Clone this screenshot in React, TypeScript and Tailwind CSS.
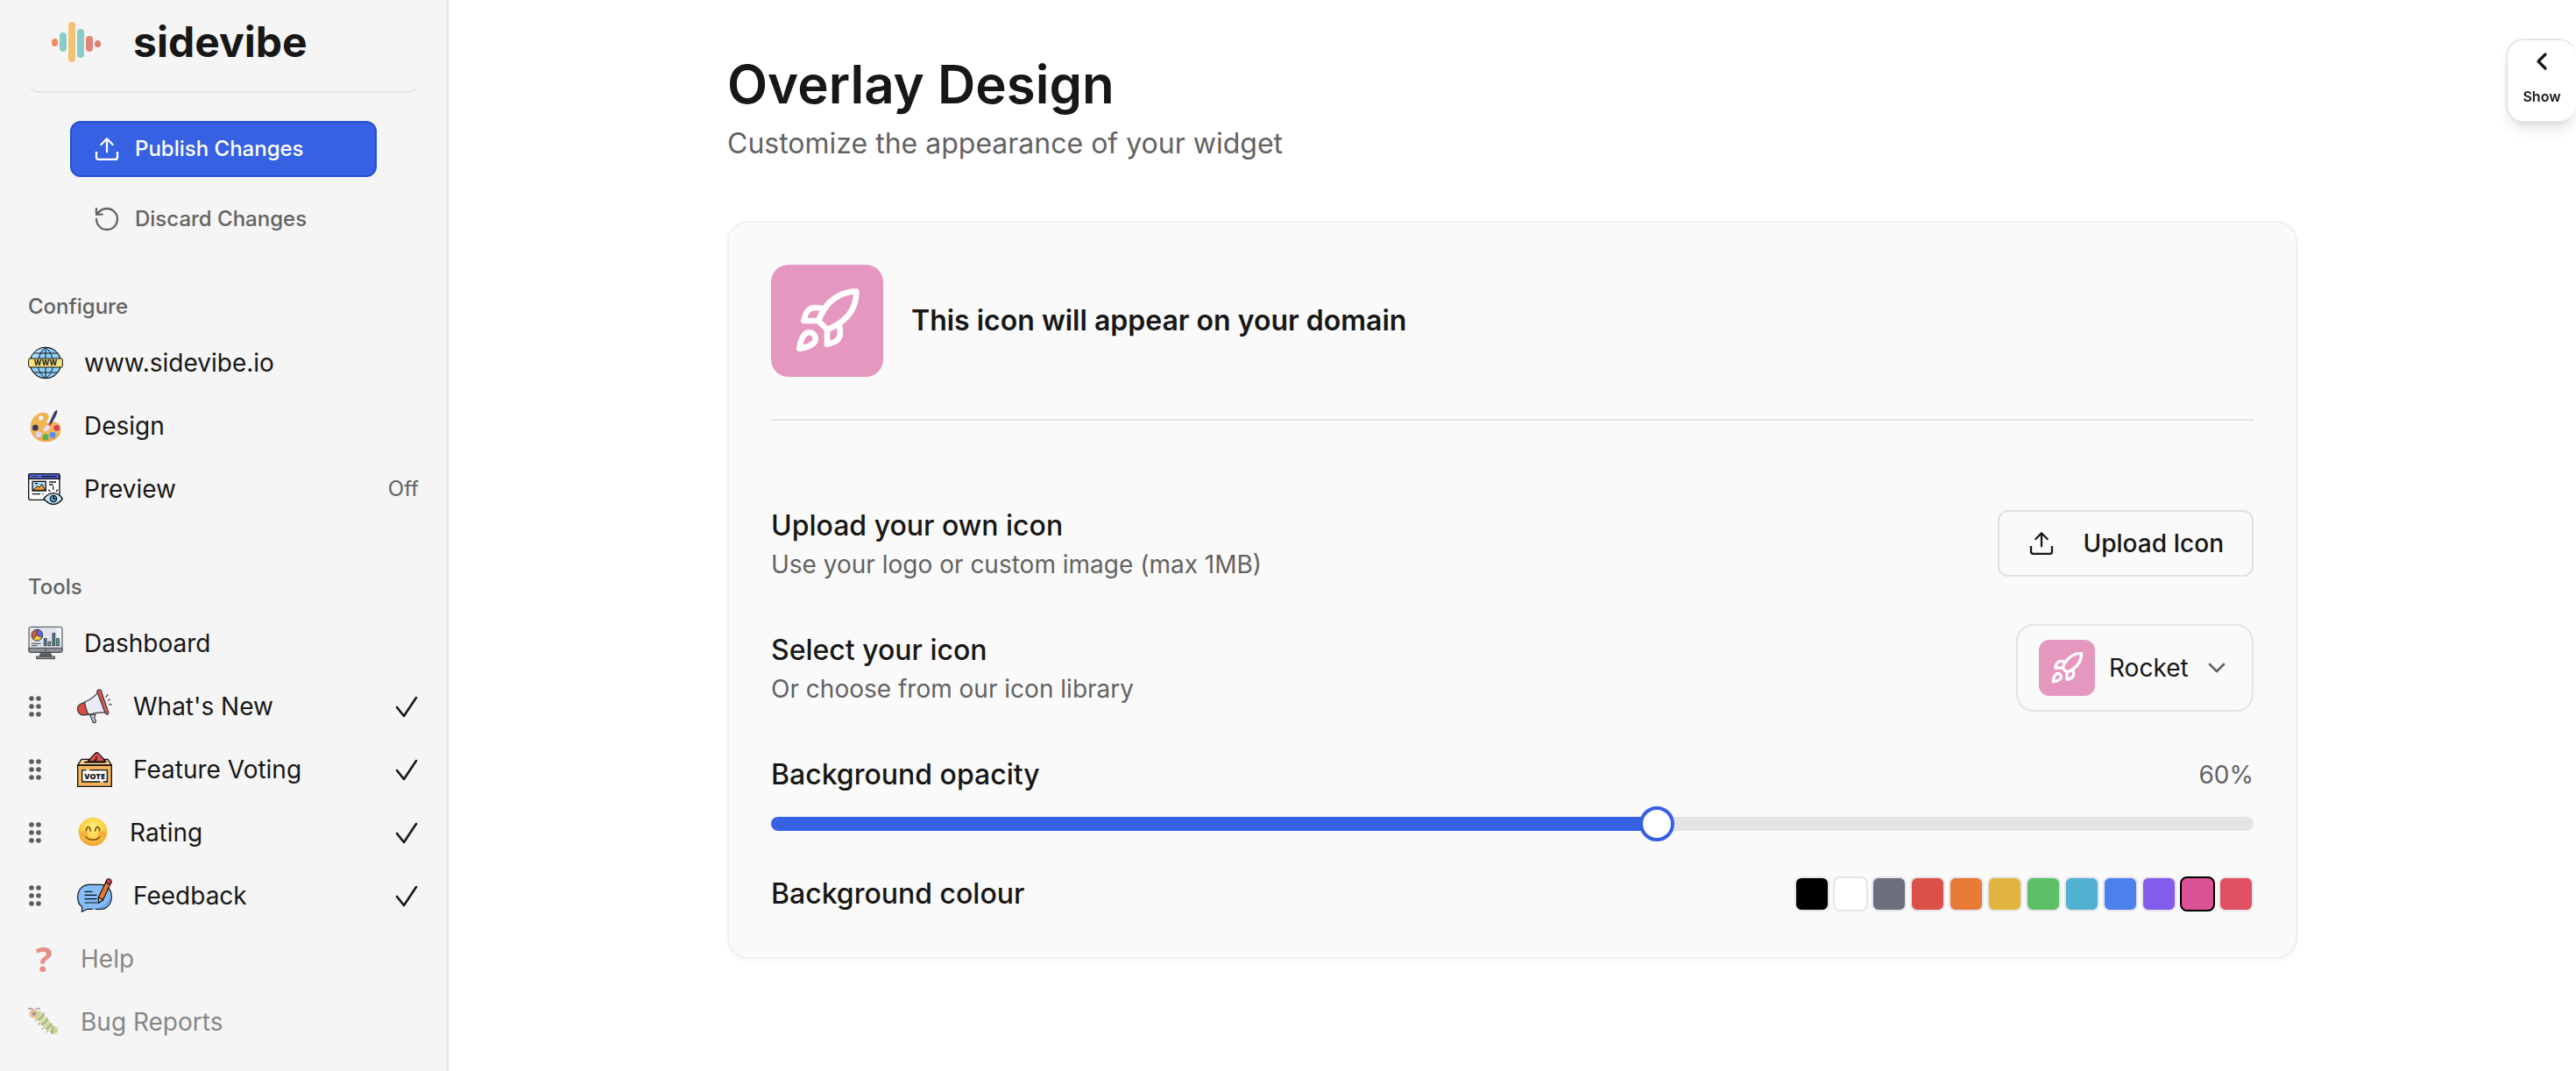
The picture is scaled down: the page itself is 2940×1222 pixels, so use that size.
import React, { useState } from 'react';
import { ChevronDown, ChevronLeft, Rocket, RotateCcw } from 'lucide-react';

interface IconProps {
  className?: string;
}

const UploadIcon: React.FC<IconProps> = ({ className }) => (
  <svg className={className} fill="none" stroke="currentColor" strokeWidth="1.7" strokeLinejoin="round" viewBox="0 0 24 24">
    <path strokeLinecap="round" d="M12 3.3v11.2M7 8.2l5-5 5 5" />
    <path d="M3 14.2v5a1.7 1.7 0 0 0 1.7 1.7h14.6a1.7 1.7 0 0 0 1.7-1.7v-5" />
  </svg>
);

const LogoMark: React.FC = () => (
  <svg className="w-[58px] h-12" viewBox="0 0 58 48">
    <rect x="1" y="20" width="7" height="9" rx="3.5" fill="#ee8e60" />
    <rect x="10" y="13" width="8" height="22" rx="4" fill="#8acbca" />
    <rect x="20" y="1" width="8" height="46" rx="4" fill="#f2c273" />
    <rect x="30" y="9" width="8" height="33" rx="4" fill="#8acbca" />
    <rect x="40" y="17" width="8" height="18" rx="4" fill="#e28579" />
    <rect x="50" y="22" width="7" height="8" rx="3.5" fill="#dd7d72" />
  </svg>
);

const GlobeIcon: React.FC = () => (
  <svg className="size-10" viewBox="0 0 120 120" fill="none" stroke="#151515" strokeWidth="3">
    <circle cx="60" cy="60" r="53" fill="#8fcdf8" />
    <path d="M12 37a53 53 0 0 1 50-30c-20 6-30 26-34 46z" fill="#b4e0fc" stroke="none" />
    <path d="M60 7v106M20 27h80M20 93h80M60 7C44 20 36 38 34 60s10 42 26 53M60 7c16 13 24 31 26 53s-10 42-26 53" />
    <circle cx="60" cy="60" r="53" />
    <rect x="2" y="45" width="116" height="30" rx="4" fill="#f4e382" />
    <text x="60" y="69" textAnchor="middle" fontFamily="Inter, sans-serif" fontSize="25" fontWeight="700" fill="#151515" stroke="none">WWW</text>
  </svg>
);

const PaletteIcon: React.FC = () => (
  <svg className="size-10" viewBox="0 0 120 120">
    <path d="M58 14C28 12 8 36 8 62c0 32 26 52 54 52 30 0 50-18 50-44 0-16-10-24-26-24-8 0-14 8-20 4s6-12 5-22c-1-8-5-13-13-14z" fill="#f2b655" />
    <path d="M8 66c2 30 26 48 54 48 30 0 50-18 50-44-6 22-22 34-50 34-26 0-46-14-54-38z" fill="#f4a24a" />
    <circle cx="44" cy="33" r="7.5" fill="#fff" />
    <circle cx="25" cy="66" r="10.5" fill="#3d3b5c" />
    <circle cx="98" cy="67" r="10.5" fill="#d6455a" />
    <circle cx="36" cy="89" r="10.5" fill="#d9d5f5" />
    <circle cx="60" cy="98" r="10.5" fill="#54b457" />
    <circle cx="84" cy="91" r="10.5" fill="#4f93f7" />
    <path d="M99 6c-7 0-12 12-17 23l-10 22 7 4 12-21C96 24 103 10 99 6z" fill="#3a3a5e" />
    <path d="m71 49 9 5-3 7-9-5z" fill="#e0566a" />
    <path d="M67 56c-8 3-13 10-15 22 10 2 21-4 24-16z" fill="#e4def8" />
  </svg>
);

const PreviewIcon: React.FC = () => (
  <svg className="size-10" viewBox="0 0 120 120" fill="none" stroke="#111" strokeWidth="4">
    <rect x="2" y="8" width="106" height="89" rx="6" fill="#fff" />
    <path d="M2 25V14a6 6 0 0 1 6-6h94a6 6 0 0 1 6 6v11z" fill="#5567de" />
    <path d="M12 17h4M20 17h4M28 17h4M46 17h52" />
    <rect x="15" y="34" width="46" height="32" fill="#aedcf5" />
    <path d="m17 64 15-14 6 5 9-12 12 21z" fill="#f59f38" strokeWidth="3" />
    <path d="M24 41h9M72 36h24M72 45h14M14 77h28M49 77h4M86 50v12M70 62l6 6M102 62l-6 6" />
    <path d="M54 93c10-13 21-19 33-19s23 6 31 19c-9 13-19 19-31 19S64 106 54 93z" fill="#c4e9fa" strokeLinejoin="round" />
    <circle cx="87" cy="93" r="11" fill="#5ab2e8" />
    <path d="M87 84v9h8" />
  </svg>
);

const DashboardIcon: React.FC = () => (
  <svg className="size-10" viewBox="0 0 120 120" stroke="#40454b" strokeWidth="3">
    <rect x="3" y="4" width="114" height="87" rx="5" fill="#dfe3ec" />
    <path d="M94 6h20v50c-16-10-16-30-20-50z" fill="#eff2f8" stroke="none" />
    <path d="M3 76h114v10a5 5 0 0 1-5 5H8a5 5 0 0 1-5-5z" fill="#8d929a" />
    <circle cx="60" cy="83" r="1.5" />
    <path d="M44 91h32l5 15H39z" fill="#5e636b" />
    <rect x="29" y="105" width="62" height="8" fill="#8d929a" />
    <circle cx="31" cy="32" r="19" fill="#d2553f" />
    <path d="M31 32V13a19 19 0 0 1 17 27z" fill="#5a68e4" />
    <path d="m31 32 17 8a19 19 0 0 1-31 5z" fill="#f4cf3e" />
    <rect x="55" y="44" width="8" height="24" fill="#3b83a8" />
    <rect x="69" y="55" width="8" height="13" fill="#4fb793" />
    <rect x="84" y="26" width="8" height="42" fill="#3b83a8" />
    <rect x="98" y="44" width="8" height="24" fill="#4fb793" />
    <path d="M12 61h32M12 68h20" />
  </svg>
);

const MegaphoneIcon: React.FC = () => (
  <svg className="size-10" viewBox="0 0 120 120" fill="none" stroke="#33343c" strokeWidth="3.5" strokeLinejoin="round" strokeLinecap="round">
    <path d="m44 88 10 25c2 5 12 3 10-3l-5-12 4-11z" fill="#c9cbdc" />
    <path d="m26 45-14 7C-2 60-1 78 10 86c8 6 18 4 30 2z" fill="#d84f43" />
    <path d="M26 45c22-9 38-22 47-36l29 72c-20-1-40 1-62 7-8-12-12-26-14-43z" fill="#e9eaf6" />
    <path d="M72 4c3-3 8-2 10 2l25 74c2 7-6 10-10 4L69 11c-1-3 0-6 3-7z" fill="#e05a4c" />
    <path d="m99 28 6-8M106 39l7-3M110 53l8 1" />
  </svg>
);

const VoteIcon: React.FC = () => (
  <svg className="size-10" viewBox="0 0 120 120" fill="none" stroke="#111" strokeWidth="4" strokeLinejoin="round">
    <path d="M15 25h90l13 20H2z" fill="#f9d18b" />
    <path d="M24 35h72" strokeWidth="5" />
    <path d="M36 33 62 5c4-4 7-4 11 0l26 28z" fill="#e2554f" />
    <path d="M66 14v11c0 4-6 4-8 1" />
    <path d="M2 46h116v72H2z" fill="#f3b35b" />
    <path d="M17 62h86v40H17z" fill="#fff" />
    <path d="M31 62h12M78 102h12" stroke="#fff" />
    <text x="60" y="92" textAnchor="middle" fontFamily="Open Sans, sans-serif" fontSize="27" fontWeight="800" fill="#111" stroke="none">VOTE</text>
  </svg>
);

const SmileIcon: React.FC = () => (
  <svg className="w-9 h-10" viewBox="0 0 108 120" fill="none">
    <defs>
      <radialGradient id="smile" cx="50%" cy="35%" r="65%">
        <stop offset="0" stopColor="#fdf07a" />
        <stop offset="0.6" stopColor="#fbd043" />
        <stop offset="1" stopColor="#ee9f2c" />
      </radialGradient>
    </defs>
    <circle cx="54" cy="57" r="49" fill="url(#smile)" />
    <ellipse cx="24" cy="65" rx="13" ry="10" fill="#f79a3c" opacity="0.6" />
    <ellipse cx="84" cy="65" rx="13" ry="10" fill="#f79a3c" opacity="0.6" />
    <g stroke="#7c4a12" strokeWidth="5" strokeLinecap="round">
      <path d="M31 54c2-18 12-18 15 0M62 54c3-18 13-18 15 0" />
      <path d="M30 75c12 13 36 13 48 0" />
    </g>
  </svg>
);

const FeedbackIcon: React.FC = () => (
  <svg className="size-10" viewBox="0 0 120 120" fill="none" stroke="#111" strokeWidth="3.5" strokeLinejoin="round" strokeLinecap="round">
    <path d="M42 22h38c24 0 38 18 38 42s-16 42-38 42H36l-20 9 1-17C6 92 2 80 2 64c0-26 18-42 40-42z" fill="#86bdf8" />
    <path d="M115 58c4 30-14 46-40 46H56c34-4 52-20 59-46z" fill="#68a5f4" stroke="none" />
    <path d="M27 46h24M27 58h39M27 71h39M27 84h47" />
    <path d="M54 106h8" stroke="#86bdf8" />
    <path d="m102 6 15 6-28 62-15 10-1-18z" fill="#ea7a30" />
    <path d="m73 66 16 8-15 10z" fill="#f6cf94" />
    <path d="M99 12c2-9 5-11 12-9 7 3 8 7 5 14l-3 4-15-6z" fill="#dd3d4e" />
  </svg>
);

const CaterpillarIcon: React.FC = () => (
  <svg className="w-9 h-10" viewBox="0 0 108 120" fill="none" strokeLinecap="round">
    <path d="M20 22C16 12 8 12 2 16M26 20c2-8 8-9 14-4" stroke="#444" strokeWidth="4" />
    <path d="m28 48-2 8M40 62l-4 8M54 80l-5 6M68 90l-4 5" stroke="#b0443a" strokeWidth="4" />
    <circle cx="88" cy="88" r="14" fill="#9cb83c" />
    <circle cx="74" cy="78" r="15" fill="#b8cf52" />
    <circle cx="60" cy="64" r="15" fill="#a9c546" />
    <circle cx="48" cy="50" r="15" fill="#bcd45a" />
    <circle cx="36" cy="38" r="16" fill="#adc74a" />
    <path d="M34 52c12-4 18-12 20-22M46 68c12-4 18-12 20-20M62 84c8-4 14-10 17-18M80 98c4-6 5-14 4-22" stroke="#4d5a26" strokeWidth="5" />
    <circle cx="19" cy="32" r="15" fill="#e58a4b" />
    <circle cx="20" cy="32" r="6" fill="#333" />
  </svg>
);

const Grip: React.FC = () => (
  <svg className="w-4 h-7 text-[#5c5c5c]" fill="currentColor" viewBox="0 0 16 28">
    <circle cx="4" cy="5" r="2.8" />
    <circle cx="12" cy="5" r="2.8" />
    <circle cx="4" cy="14" r="2.8" />
    <circle cx="12" cy="14" r="2.8" />
    <circle cx="4" cy="23" r="2.8" />
    <circle cx="12" cy="23" r="2.8" />
  </svg>
);

const Tick: React.FC = () => (
  <svg className="size-7" fill="none" stroke="currentColor" strokeWidth="2.6" strokeLinecap="round" strokeLinejoin="round" viewBox="0 0 28 28">
    <path d="m3 15 8 10L25 4" />
  </svg>
);

interface NavItemProps {
  icon: React.ReactNode;
  label: string;
  status?: string;
  sortable?: boolean;
  muted?: boolean;
}

const NavItem: React.FC<NavItemProps> = ({ icon, label, status, sortable, muted }) => (
  <li>
    <a href="#" className={`flex items-center h-18 text-[28px] leading-10 ${muted ? 'opacity-50' : ''}`}>
      {sortable && (
        <span className="mr-10">
          <Grip />
        </span>
      )}
      <span className="mr-6 shrink-0">{icon}</span>
      <span className="flex-1">{label}</span>
      {status && <span className="text-2xl text-[#636363]">{status}</span>}
      {sortable && <Tick />}
    </a>
  </li>
);

const Sidebar: React.FC = () => (
  <aside className="w-[512px] shrink-0 px-8 bg-[#f5f5f5] border-r-2 border-[#e5e5e5]">
    <a href="#" className="flex items-center gap-9 h-[106px] pb-2 pl-[26px] rounded-xl border-b-2 border-[#e5e5e5]">
      <LogoMark />
      <span className="text-5xl font-bold">sidevibe</span>
    </a>
    <div className="mx-12 mt-8 flex flex-col gap-4">
      <button className="flex items-center gap-4 h-16 px-6 rounded-xl border-2 border-[#2850cf] bg-[#3761e3] text-white text-2xl font-medium">
        <UploadIcon className="size-8" />
        Publish Changes
      </button>
      <button className="flex items-center gap-4 h-16 px-6 rounded-xl border-2 border-transparent text-[#636363] text-2xl font-medium">
        <RotateCcw className="size-8" strokeWidth={1.7} />
        Discard Changes
      </button>
    </div>
    <nav>
      <h2 className="mt-13 mb-3 text-2xl font-medium text-[#636363]">Configure</h2>
      <ul>
        <NavItem icon={<GlobeIcon />} label="www.sidevibe.io" />
        <NavItem icon={<PaletteIcon />} label="Design" />
        <NavItem icon={<PreviewIcon />} label="Preview" status="Off" />
      </ul>
      <h2 className="mt-15 mb-3 text-2xl font-medium text-[#636363]">Tools</h2>
      <ul>
        <NavItem icon={<DashboardIcon />} label="Dashboard" />
        <NavItem icon={<MegaphoneIcon />} label="What's New" sortable />
        <NavItem icon={<VoteIcon />} label="Feature Voting" sortable />
        <NavItem icon={<SmileIcon />} label="Rating" sortable />
        <NavItem icon={<FeedbackIcon />} label="Feedback" sortable />
        <NavItem
          icon={<span className="block w-9 text-center text-[40px] font-bold text-[#d32b20] font-['Noto_Sans',sans-serif]">?</span>}
          label="Help"
          muted
        />
        <NavItem icon={<CaterpillarIcon />} label="Bug Reports" muted />
      </ul>
    </nav>
  </aside>
);

const colours = [
  { name: 'Black', bg: 'bg-black' },
  { name: 'White', bg: 'bg-white' },
  { name: 'Grey', bg: 'bg-[#6c707e]' },
  { name: 'Red', bg: 'bg-[#dc504a]' },
  { name: 'Orange', bg: 'bg-[#e87b35]' },
  { name: 'Yellow', bg: 'bg-[#e1b53f]' },
  { name: 'Green', bg: 'bg-[#5dc069]' },
  { name: 'Cyan', bg: 'bg-[#50b1d1]' },
  { name: 'Blue', bg: 'bg-[#4b80ed]' },
  { name: 'Purple', bg: 'bg-[#835ceb]' },
  { name: 'Pink', bg: 'bg-[#db5296]' },
  { name: 'Rose', bg: 'bg-[#e05062]' },
];

const App: React.FC = () => {
  const [opacity, setOpacity] = useState(60);
  const [colour, setColour] = useState('Pink');

  return (
    <div className="flex min-h-screen bg-white text-[#171717] font-['Inter',sans-serif] antialiased">
      <Sidebar />
      <main className="flex-1 px-8 pt-15 pb-16">
        <div className="max-w-[1792px] mx-auto">
          <h1 className="text-[60px] leading-18 font-semibold">Overlay Design</h1>
          <p className="mt-3 text-[32px] leading-10 text-[#636363]">Customize the appearance of your widget</p>

          <section className="mt-17 p-12 rounded-3xl border-2 border-[#f0f0f0] bg-[#fafafa] shadow-[0_2px_4px_rgba(0,0,0,0.04)]">
            <div className="flex items-center gap-8 pb-12 border-b-2 border-[#e5e5e5]">
              <div className="size-32 flex items-center justify-center rounded-[20px] bg-[#e597bf] text-white">
                <Rocket className="size-20" />
              </div>
              <p className="text-[32px] leading-10 font-semibold">This icon will appear on your domain</p>
            </div>

            <div className="mt-24 flex items-center justify-between">
              <div>
                <h2 className="text-[32px] leading-12 font-medium">Upload your own icon</h2>
                <p className="text-[28px] leading-10 text-[#636363]">Use your logo or custom image (max 1MB)</p>
              </div>
              <button className="flex items-center gap-8 h-19 px-8 rounded-xl border-2 border-[#e0e0e0] text-[28px] font-medium">
                <UploadIcon className="size-8" />
                Upload Icon
              </button>
            </div>

            <div className="mt-12 flex items-center justify-between">
              <div>
                <label htmlFor="icon" className="block text-[32px] leading-12 font-medium">Select your icon</label>
                <p className="text-[28px] leading-10 text-[#636363]">Or choose from our icon library</p>
              </div>
              <div className="flex items-center gap-4 h-25 px-6 rounded-[20px] border-2 border-[#e5e5e5]">
                <div className="size-16 flex items-center justify-center rounded-xl bg-[#e597bf] text-white">
                  <Rocket className="size-10" />
                </div>
                <select id="icon" className="appearance-none bg-transparent text-[28px] leading-10">
                  <option>Rocket</option>
                </select>
                <ChevronDown className="size-8 text-[#636363]" />
              </div>
            </div>

            <div className="mt-12 flex items-center justify-between">
              <label htmlFor="opacity" className="text-[32px] leading-12 font-medium">Background opacity</label>
              <output htmlFor="opacity" className="text-[28px] leading-10 text-[#636363]">{opacity}%</output>
            </div>
            <input
              id="opacity"
              type="range"
              min={0}
              max={100}
              value={opacity}
              onChange={(e) => setOpacity(Number(e.target.value))}
              style={{ '--fill': `${opacity}%` } as React.CSSProperties}
              className="mt-3 block w-full h-10 appearance-none bg-transparent [&::-webkit-slider-runnable-track]:h-4 [&::-webkit-slider-runnable-track]:rounded-full [&::-webkit-slider-runnable-track]:bg-[linear-gradient(to_right,#3761e3_var(--fill),#e4e4e4_var(--fill))] [&::-webkit-slider-thumb]:appearance-none [&::-webkit-slider-thumb]:size-10 [&::-webkit-slider-thumb]:-mt-3 [&::-webkit-slider-thumb]:rounded-full [&::-webkit-slider-thumb]:border-4 [&::-webkit-slider-thumb]:border-[#3761e3] [&::-webkit-slider-thumb]:bg-white"
            />

            <div className="mt-9 flex items-center justify-between">
              <h2 id="colour-label" className="text-[32px] leading-12 font-medium">Background colour</h2>
              <div role="radiogroup" aria-labelledby="colour-label" className="flex gap-1">
                {colours.map(({ name, bg }) => (
                  <input
                    key={name}
                    type="radio"
                    name="colour"
                    aria-label={name}
                    checked={colour === name}
                    onChange={() => setColour(name)}
                    className={`size-10 appearance-none rounded-lg border-2 border-[#e5e5ea] checked:border-black ${bg}`}
                  />
                ))}
              </div>
            </div>
          </section>
        </div>
      </main>

      <button className="fixed top-11 right-0 w-20 h-24 flex flex-col items-center gap-3 pt-2 rounded-[20px] border-2 border-r-0 border-[#e5e5e5] bg-white shadow-lg text-base font-semibold">
        <ChevronLeft className="size-8" strokeWidth={2.4} />
        Show
      </button>
    </div>
  );
};

export default App;
